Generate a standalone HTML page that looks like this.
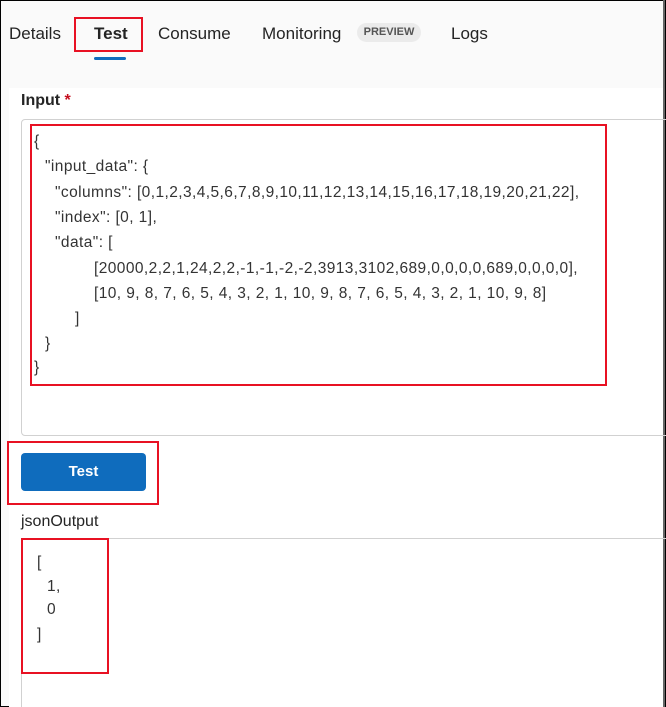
<!DOCTYPE html>
<html><head><meta charset="utf-8"><style>
*{margin:0;padding:0;box-sizing:border-box}
html,body{width:666px;height:707px;overflow:hidden;background:#fff;font-family:"Liberation Sans",sans-serif}
.frame{position:absolute;left:0;top:0;width:666px;height:707px;border:1px solid #000;background:#fafafa}
.panel{position:absolute;left:9px;top:88px;width:655px;height:619px;background:#fff}
.rline{position:absolute;left:663px;top:0;width:2px;height:707px;background:#666}
.t{position:absolute;white-space:pre;color:#242424}
.tab{font-size:17px;top:24px}
.code{font-size:15.5px;color:#333;letter-spacing:0.42px;line-height:18px}
.red{position:absolute;border:2px solid #e81123}
</style></head><body>
<div class="frame"></div>
<div class="panel"></div>
<div class="rline"></div>
<div class="t tab" style="left:9px">Details</div>
<div class="t tab" style="left:94px;font-weight:bold">Test</div>
<div style="position:absolute;left:94px;top:57px;width:32px;height:3px;background:#0f6cbd;border-radius:2px"></div>
<div class="t tab" style="left:158px">Consume</div>
<div class="t tab" style="left:262px">Monitoring</div>
<div style="position:absolute;left:357px;top:23px;width:64px;height:19px;background:#ebebeb;border-radius:10px;font-size:11px;color:#555;font-weight:bold;text-align:center;line-height:19px">PREVIEW</div>
<div class="t tab" style="left:451px">Logs</div>
<div class="red" style="left:74px;top:17px;width:69px;height:35px"></div>

<div class="t" style="left:21px;top:92px;font-size:16px;font-weight:bold">Input <span style="color:#c50f1f">*</span></div>
<div style="position:absolute;left:21px;top:119px;width:650px;height:317px;border:1px solid #d1d1d1;border-radius:4px"></div>
<div class="t code" style="left:34px;top:133px">{</div>
<div class="t code" style="left:45px;top:158px">"input_data": {</div>
<div class="t code" style="left:55px;top:184px">"columns": [0,1,2,3,4,5,6,7,8,9,10,11,12,13,14,15,16,17,18,19,20,21,22],</div>
<div class="t code" style="left:55px;top:209px">"index": [0, 1],</div>
<div class="t code" style="left:55px;top:234px">"data": [</div>
<div class="t code" style="left:94px;top:260px">[20000,2,2,1,24,2,2,-1,-1,-2,-2,3913,3102,689,0,0,0,0,689,0,0,0,0],</div>
<div class="t code" style="left:94px;top:285px">[10, 9, 8, 7, 6, 5, 4, 3, 2, 1, 10, 9, 8, 7, 6, 5, 4, 3, 2, 1, 10, 9, 8]</div>
<div class="t code" style="left:75px;top:310px">]</div>
<div class="t code" style="left:45px;top:335px">}</div>
<div class="t code" style="left:34px;top:359px">}</div>
<div class="red" style="left:30px;top:124px;width:577px;height:262px"></div>

<div style="position:absolute;left:21px;top:453px;width:125px;height:38px;background:#0f6cbd;border-radius:4px;color:#fff;font-size:15px;font-weight:bold;text-align:center;line-height:38px">Test</div>
<div class="red" style="left:7px;top:441px;width:152px;height:64px"></div>

<div class="t" style="left:21px;top:513px;font-size:16px">jsonOutput</div>
<div style="position:absolute;left:21px;top:538px;width:645px;height:1px;background:#d1d1d1"></div>
<div style="position:absolute;left:21px;top:538px;width:1px;height:169px;background:#d1d1d1"></div>
<div class="t code" style="left:37px;top:554px">[</div>
<div class="t code" style="left:47px;top:578px">1,</div>
<div class="t code" style="left:47px;top:601px">0</div>
<div class="t code" style="left:37px;top:626px">]</div>
<div class="red" style="left:21px;top:538px;width:88px;height:136px"></div>
</body></html>
